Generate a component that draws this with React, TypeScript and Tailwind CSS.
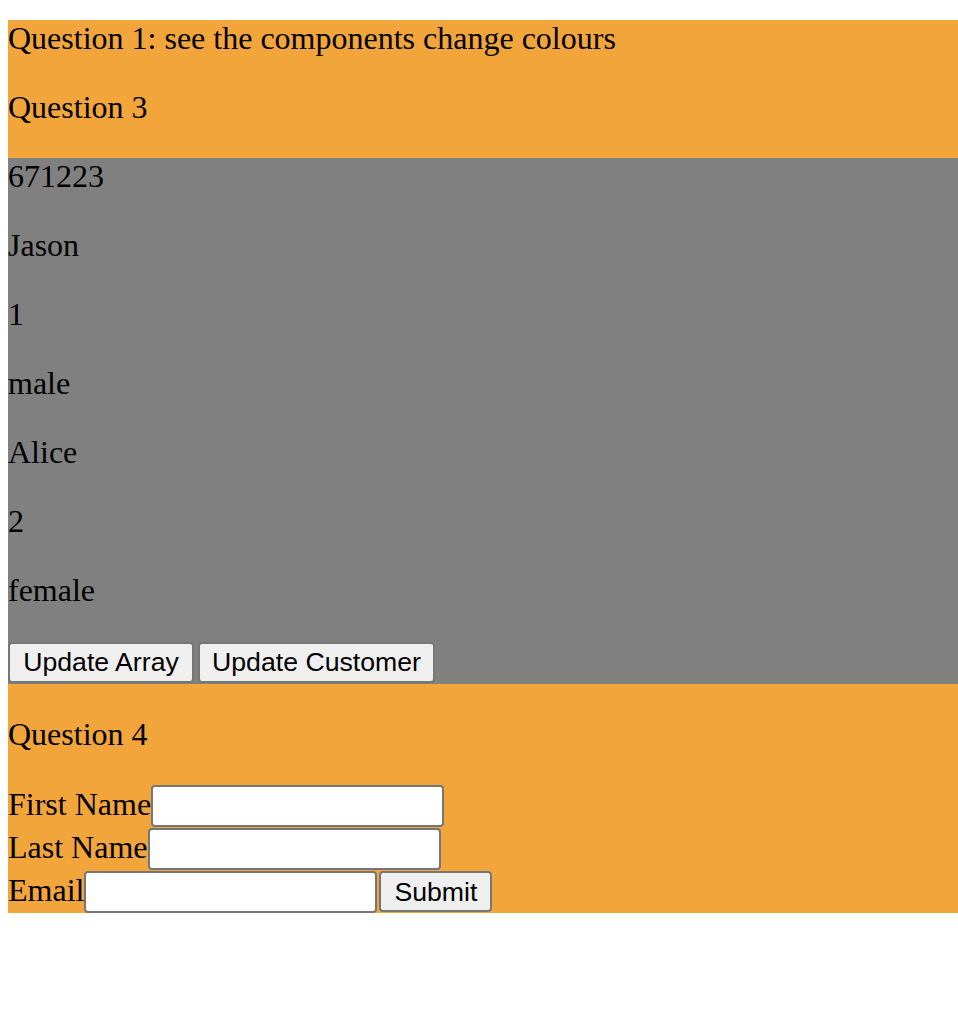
import { useState } from 'react'

const btn =
  "h-[41px] rounded-[4px] border-2 border-[#767676] bg-[#efefef] font-['Liberation_Sans',Arial,sans-serif] text-[26.67px] leading-none text-black"

const field =
  'h-[42px] w-[293px] rounded-[4px] border-2 border-[#767676] bg-white px-1 font-[\'Liberation_Sans\',Arial,sans-serif] text-[26.67px] outline-none'

export default function App() {
  const [customers] = useState([
    { id: '671223', name: 'Jason', no: '1', gender: 'male' },
    { id: '', name: 'Alice', no: '2', gender: 'female' },
  ])

  const lines = [
    customers[0].id,
    customers[0].name,
    customers[0].no,
    customers[0].gender,
    customers[1].name,
    customers[1].no,
    customers[1].gender,
  ]

  return (
    <div className="min-h-screen bg-white pl-2 pt-5 font-['Liberation_Serif','Times_New_Roman',serif] text-[32px] leading-[37px] text-black">
      {/* question 1 & 3 */}
      <div className="bg-[#f2a53a] pb-8">
        <p>Question 1: see the components change colours</p>
        <p className="mt-8">Question 3</p>
      </div>

      <div className="bg-[#808080]">
        {lines.map((l, i) => (
          <p key={i} className={i === 0 ? '' : 'mt-8'}>
            {l}
          </p>
        ))}
        <div className="mt-[33px] flex gap-1 pb-px">
          <button className={btn + ' w-[186px]'}>Update Array</button>
          <button className={btn + ' w-[237px]'}>Update Customer</button>
        </div>
      </div>

      {/* question 4 */}
      <div className="bg-[#f2a53a] pt-8">
        <p>Question 4</p>
        <form className="mt-8" onSubmit={(e) => e.preventDefault()}>
          <div className="flex h-[43px] items-baseline">
            <label>First Name</label>
            <input className={field} />
          </div>
          <div className="flex h-[43px] items-baseline">
            <label>Last Name</label>
            <input className={field} />
          </div>
          <div className="flex h-[42px] items-baseline">
            <label>Email</label>
            <input className={field} />
            <button type="submit" className={btn + ' ml-[2px] w-[113px]'}>
              Submit
            </button>
          </div>
        </form>
      </div>
    </div>
  )
}
